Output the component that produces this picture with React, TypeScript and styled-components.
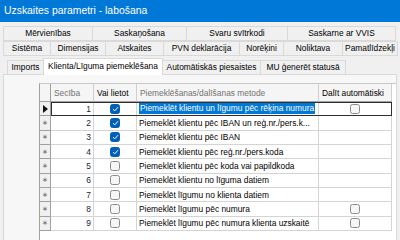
import React from 'react'
import styled, { createGlobalStyle } from 'styled-components'

const GlobalStyle = createGlobalStyle`
  html, body {
    margin: 0;
    padding: 0;
    width: 400px;
    height: 240px;
    overflow: hidden;
    background: #f0f0f0;
    font-family: "Liberation Sans", Arial, sans-serif;
  }
`

const Window = styled.div`
  display: flex;
  flex-direction: column;
  width: 400px;
  height: 240px;
  overflow: hidden;
  background: #f0f0f0;
`

const TitleBar = styled.div`
  height: 22px;
  line-height: 22px;
  padding-left: 4px;
  background: #0078d7;
  color: #ffffff;
  font-size: 10.4px;
`

const TabStrip = styled.div`
  display: flex;
  flex-direction: column;
  margin-top: 5px;
`

const TabRow = styled.div<{ $indent: number }>`
  display: flex;
  padding-left: ${p => p.$indent}px;
  height: 15px;
`

const LastTabRow = styled(TabRow)`
  height: 17px;
  align-items: flex-end;
`

const Tab = styled.div<{ $w: number }>`
  flex: none;
  box-sizing: border-box;
  width: ${p => p.$w + 1}px;
  height: 15px;
  margin-left: -1px;
  margin-top: -1px;
  border: 1px solid #d9d9d9;
  background: #f0f0f0;
  color: #000;
  font-size: 8.4px;
  line-height: 13px;
  text-align: center;
  white-space: nowrap;
`

const LowTab = styled(Tab)`
  margin-top: 0;
  height: 14px;
  line-height: 12px;
  border-bottom: none;
`

const ActiveTab = styled(Tab)`
  position: relative;
  z-index: 1;
  margin-top: 0;
  margin-bottom: -1px;
  height: 17px;
  line-height: 14px;
  background: #ffffff;
  border-bottom: none;
`

const Page = styled.div`
  flex: 1;
  display: flex;
  margin: 0 3px;
  padding: 8px 0 0 35px;
  border: 1px solid #d9d9d9;
  border-bottom: none;
  background: #f7f7f7;
`

const Grid = styled.div`
  flex: 1;
  display: flex;
  flex-direction: column;
  background: #ffffff;
  border-left: 1px solid #a0a0a0;
  border-top: 1px solid #c8c8c8;
  font-size: 8.4px;
`

const cols = '43px 43px 182px 73px'

const Row = styled.div`
  display: flex;
  height: 14.33px;
`

const HeaderRow = styled(Row)`
  height: 18px;
`

const RowHead = styled.div`
  flex: none;
  box-sizing: border-box;
  width: 11px;
  display: flex;
  align-items: center;
  justify-content: center;
  background: #f0f0f0;
  border-right: 1px solid #a0a0a0;
  border-bottom: 1px solid #a0a0a0;
  color: #6a6a6a;
  font-size: 7px;
`

const Corner = styled(RowHead)`
  background: #f5f5f5;
`

const Arrow = styled.span`
  width: 0;
  height: 0;
  border-top: 4px solid transparent;
  border-bottom: 4px solid transparent;
  border-left: 5px solid #111;
  margin-left: 1px;
`

const Cells = styled.div<{ $current?: boolean }>`
  display: grid;
  grid-template-columns: ${cols};
  outline: ${p => (p.$current ? '1px solid #303030' : 'none')};
  outline-offset: -1px;
  position: relative;
`

const HeadCell = styled.div<{ $dim?: boolean }>`
  box-sizing: border-box;
  display: flex;
  align-items: center;
  padding-left: 3px;
  background: #f5f5f5;
  border-right: 1px solid #d0d0d0;
  border-bottom: 1px solid #a0a0a0;
  color: ${p => (p.$dim ? '#727272' : '#000')};
  white-space: nowrap;
  overflow: hidden;
`

const Cell = styled.div<{ $align?: 'left' | 'right' | 'center' }>`
  box-sizing: border-box;
  display: flex;
  align-items: center;
  justify-content: ${p =>
    p.$align === 'right' ? 'flex-end' : p.$align === 'center' ? 'center' : 'flex-start'};
  padding: 0 2px;
  border-right: 1px solid #d4d4d4;
  border-bottom: 1px solid #d4d4d4;
  color: #000;
  white-space: nowrap;
  overflow: hidden;
`

const NumCell = styled(Cell)`
  color: #1a1a3a;
`

const Selected = styled.span`
  background: #0078d7;
  color: #ffffff;
  padding: 0 1px;
  line-height: 11px;
`

const Box = styled.span<{ $checked?: boolean }>`
  box-sizing: border-box;
  display: inline-flex;
  align-items: center;
  justify-content: center;
  width: 10px;
  height: 10px;
  border-radius: 2.5px;
  border: 1px solid ${p => (p.$checked ? '#005fb8' : '#8a8a8a')};
  background: ${p => (p.$checked ? '#005fb8' : '#f6f6f6')};
`

function Check(props: { checked: boolean }) {
  return (
    <Box $checked={props.checked}>
      {props.checked && (
        <svg width="7" height="6" viewBox="0 0 7 6">
          <path d="M1 3.2 L2.8 4.8 L6 1.2" fill="none" stroke="#fff" strokeWidth="1" />
        </svg>
      )}
    </Box>
  )
}

const topTabs: [string, number][] = [
  ['Mērvienības', 89],
  ['Saskaņošana', 94],
  ['Svaru svītrkodi', 101],
  ['Saskarne ar VVIS', 108],
]

const midTabs: [string, number][] = [
  ['Sistēma', 47],
  ['Dimensijas', 55],
  ['Atskaites', 58],
  ['PVN deklarācija', 76],
  ['Norēķini', 44],
  ['Noliktava', 59],
  ['Pamatlīdzekļi', 55],
]

interface Rule {
  order: number
  used: boolean
  method: string
  split?: boolean
}

const rules: Rule[] = [
  { order: 1, used: true, method: 'Piemeklēt klientu un līgumu pēc rēķina numura', split: true },
  { order: 2, used: true, method: 'Piemeklēt klientu pēc IBAN un reģ.nr./pers.k...' },
  { order: 3, used: true, method: 'Piemeklēt klientu pēc IBAN' },
  { order: 4, used: true, method: 'Piemeklēt klientu pēc reģ.nr./pers.koda' },
  { order: 5, used: false, method: 'Piemeklēt klientu pēc koda vai papildkoda' },
  { order: 6, used: false, method: 'Piemeklēt klientu no līguma datiem' },
  { order: 7, used: false, method: 'Piemeklēt līgumu no klienta datiem' },
  { order: 8, used: false, method: 'Piemeklēt līgumu pēc numura', split: true },
  { order: 9, used: false, method: 'Piemeklēt līgumu pēc numura klienta uzskaitē', split: true },
]

export default function App() {
  return (
    <Window>
      <GlobalStyle />
      <TitleBar>Uzskaites parametri - labošana</TitleBar>
      <TabStrip>
        <TabRow $indent={4}>
          {topTabs.map(([t, w]) => (
            <Tab key={t} $w={w}>{t}</Tab>
          ))}
        </TabRow>
        <TabRow $indent={4}>
          {midTabs.map(([t, w]) => (
            <Tab key={t} $w={w}>{t}</Tab>
          ))}
        </TabRow>
        <LastTabRow $indent={8}>
          <LowTab $w={36}>Imports</LowTab>
          <ActiveTab $w={119}>Klienta/Līguma piemeklēšana</ActiveTab>
          <LowTab $w={98}>Automātiskās piesaistes</LowTab>
          <LowTab $w={85}>MU ģenerēt statusā</LowTab>
        </LastTabRow>
      </TabStrip>
      <Page>
        <Grid>
          <HeaderRow>
            <Corner />
            <Cells>
              <HeadCell $dim>Secība</HeadCell>
              <HeadCell>Vai lietot</HeadCell>
              <HeadCell $dim>Piemeklēšanas/dalīšanas metode</HeadCell>
              <HeadCell>Dalīt automātiski</HeadCell>
            </Cells>
          </HeaderRow>
          {rules.map((r, i) => (
            <Row key={r.order}>
              <RowHead>{i === 0 ? <Arrow /> : '∗'}</RowHead>
              <Cells $current={i === 0}>
                <NumCell $align="right">{r.order}</NumCell>
                <Cell $align="center">
                  <Check checked={r.used} />
                </Cell>
                <Cell>{i === 0 ? <Selected>{r.method}</Selected> : r.method}</Cell>
                <Cell $align="center">{r.split && <Check checked={false} />}</Cell>
              </Cells>
            </Row>
          ))}
        </Grid>
      </Page>
    </Window>
  )
}
